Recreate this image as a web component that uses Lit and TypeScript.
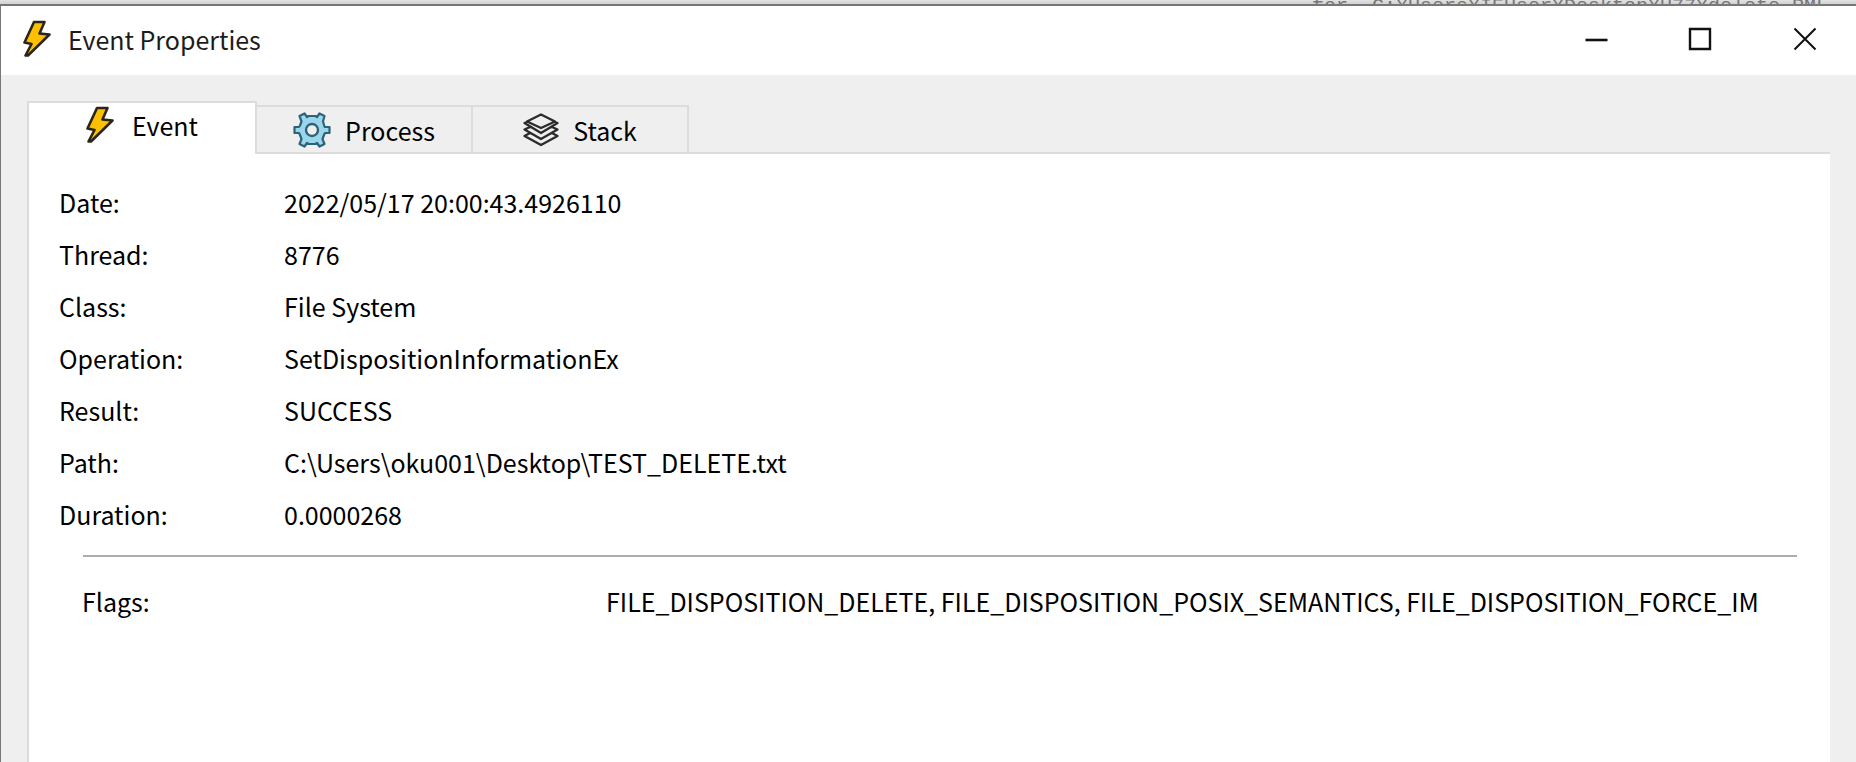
import { LitElement, html, css, svg } from "lit";
import { customElement, state } from "lit/decorators.js";

const bolt = svg`<path d="M11 2H21.500L16.500 13.500L26.500 14.500L5 35.500L2.500 35.500L8.500 24L1.500 22.500Z" fill="#fcc000" stroke="#2a2617" stroke-width="2.600" stroke-linejoin="round"/>`;

@customElement("app-root")
export class AppRoot extends LitElement {
  @state() private tab = "Event";

  private fields: [string, string][] = [
    ["Date:", "2022/05/17 20:00:43.4926110"],
    ["Thread:", "8776"],
    ["Class:", "File System"],
    ["Operation:", "SetDispositionInformationEx"],
    ["Result:", "SUCCESS"],
    ["Path:", "C:\\Users\\oku001\\Desktop\\TEST_DELETE.txt"],
    ["Duration:", "0.0000268"],
  ];

  static styles = css`
    :host {
      display: flex;
      flex-direction: column;
      height: 100vh;
      overflow: hidden;
      box-sizing: border-box;
      background: #dedede;
      color: #000;
      font: 25px/40px "Noto Sans CJK JP", "Noto Sans", sans-serif;
    }
    .behind {
      flex: none;
      display: flex;
      justify-content: flex-end;
      height: 4px;
      padding-right: 28px;
      overflow: hidden;
      background: linear-gradient(#e2e2e2, #d2d2d2);
      color: #777;
      font: 20px/14px "Liberation Mono", monospace;
      white-space: pre;
    }
    .window {
      flex: 1;
      min-height: 0;
      display: flex;
      flex-direction: column;
      border-top: 2px solid #777;
      border-left: 1px solid #777;
      background: #efefef;
    }
    .titlebar {
      flex: none;
      display: flex;
      align-items: center;
      box-sizing: border-box;
      height: 69px;
      padding: 0 0 3px 22px;
      background: #fff;
    }
    .title {
      flex: 1;
      margin: 0 0 0 17px;
      font: inherit;
      color: #1c1c1c;
    }
    button {
      border: 0;
      margin: 0;
      padding: 0;
      background: none;
      color: inherit;
      font: inherit;
    }
    svg {
      display: block;
      flex: none;
    }
    .bolt {
      width: 28px;
      height: 38px;
    }
    .control {
      display: grid;
      place-items: center;
      width: 104px;
      height: 66px;
    }
    .tabs {
      flex: none;
      display: flex;
      align-items: flex-end;
      padding: 26px 26px 0 26px;
    }
    .tab {
      display: flex;
      align-items: center;
      justify-content: center;
      gap: 14px;
      box-sizing: border-box;
      width: 216px;
      height: 47px;
      border: 2px solid #dcdcdc;
      border-width: 2px 2px 0 0;
    }
    .tab.active {
      position: relative;
      width: 230px;
      height: 53px;
      margin-bottom: -2px;
      padding-bottom: 7px;
      border-left-width: 2px;
      background: #fff;
      gap: 18px;
    }
    .panel {
      flex: 1;
      min-height: 0;
      margin: 0 26px;
      padding: 28px 33px 0 30px;
      border: 2px solid #dcdcdc;
      border-width: 2px 0 0 2px;
      background: #fff;
    }
    .fields {
      display: grid;
      grid-template-columns: 225px 1fr;
      row-gap: 12px;
      margin: 0;
    }
    dt,
    dd {
      margin: 0;
      white-space: nowrap;
      overflow: hidden;
    }
    .rule {
      height: 2px;
      margin: 21px 0 24px 24px;
      border: 0;
      background: #adadad;
    }
    .flags {
      display: grid;
      grid-template-columns: 524px 1fr;
      margin: 0 20px 0 23px;
    }
  `;

  private renderTab(name: string, icon: unknown) {
    const active = this.tab === name;
    return html`<button
      class="tab ${active ? "active" : ""}"
      role="tab"
      aria-selected=${active}
      @click=${() => (this.tab = name)}
    >${icon}<span>${name}</span></button>`;
  }

  render() {
    return html`
      <div class="behind">for  C:¥Users¥IEUser¥Desktop¥U77¥delete.PML</div>
      <main class="window">
        <header class="titlebar">
          <svg class="bolt" viewBox="0 0 28 38">${bolt}</svg>
          <h1 class="title">Event Properties</h1>
          <button class="control" aria-label="Minimize">
            <svg width="24" height="24" viewBox="0 0 24 24"><path d="M1.500 13H23.500" stroke="#111" stroke-width="2.600"/></svg>
          </button>
          <button class="control" aria-label="Maximize">
            <svg width="24" height="24" viewBox="0 0 24 24"><path d="M2 2H22V22H2Z" fill="none" stroke="#111" stroke-width="2.400"/></svg>
          </button>
          <button class="control" aria-label="Close">
            <svg width="24" height="24" viewBox="0 0 24 24"><path d="M2.500 1.500L23.500 22.500M23.500 1.500L2.500 22.500" stroke="#111" stroke-width="2"/></svg>
          </button>
        </header>
        <div class="tabs" role="tablist">
          ${this.renderTab("Event", html`<svg class="bolt" viewBox="0 0 28 38">${bolt}</svg>`)}
          ${this.renderTab("Process", html`<svg width="38" height="38" viewBox="0 0 38 38">
            <path d="M14 6L15.500 5H22.500L24 6L26.500 2.500L31.500 5L30 10.500L31.500 15.500L32 16H36.500V22H32L31 24L29.500 28L31.500 33L26.500 35.500L24 32L22.500 33H15.500L14 32L11.500 35.500L6.500 33L8.500 28L7 24L6 22H1.500V16H6L7 14.500L8.500 10.500L6.500 5L11.500 2.500Z" fill="#9bd5ec" stroke="#2b6378" stroke-width="2.200" stroke-linejoin="round"/>
            <circle cx="19" cy="19" r="6" fill="#efefef" stroke="#2b6378" stroke-width="2.400"/>
          </svg>`)}
          ${this.renderTab("Stack", html`<svg width="36" height="34" viewBox="0 0 36 34">
            <g fill="#efefef" stroke="#2b2b2b" stroke-width="2.300" stroke-linejoin="round">
              <path d="M1.500 23L7 20H29L34.500 23L18 32L1.500 23Z"/>
              <path d="M1.500 16.500L7 14H29L34.500 16.500L18 26L1.500 16.500Z"/>
              <path d="M1.500 10L7 8H29L34.500 10L18 20L1.500 10Z"/>
              <path d="M18 1.500L32 8.500L18 15L4 8.500Z" />
            </g>
          </svg>`)}
        </div>
        <section class="panel" role="tabpanel">
          <dl class="fields">
            ${this.fields.map(([k, v]) => html`<dt>${k}</dt><dd>${v}</dd>`)}
          </dl>
          <hr class="rule" />
          <dl class="flags">
            <dt>Flags:</dt>
            <dd>FILE_DISPOSITION_DELETE, FILE_DISPOSITION_POSIX_SEMANTICS, FILE_DISPOSITION_FORCE_IM</dd>
          </dl>
        </section>
      </main>
    `;
  }
}
